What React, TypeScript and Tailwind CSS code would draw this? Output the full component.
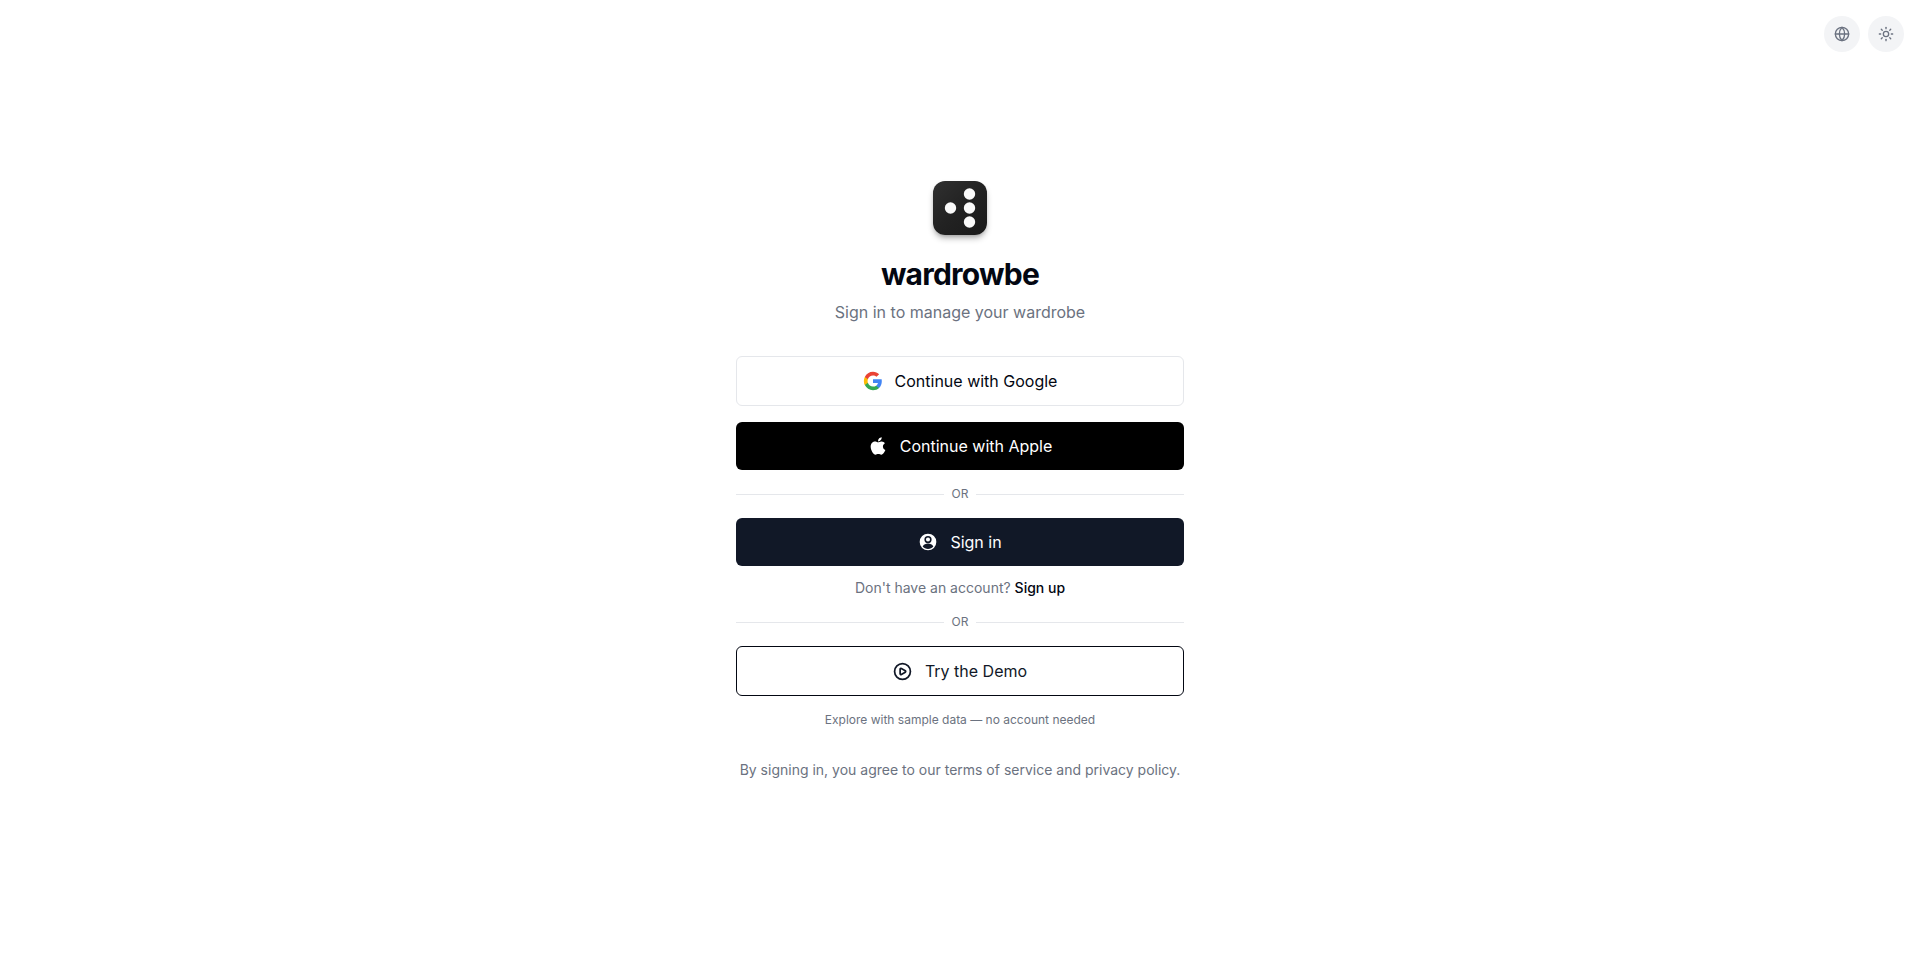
import React from "react";
import { Globe, Sun, CirclePlay } from "lucide-react";
import { FaApple } from "react-icons/fa6";

function GoogleIcon() {
  return (
    <svg viewBox="0 0 24 24" className="w-5 h-5">
      <path fill="#4285F4" d="M22.56 12.25c0-.78-.07-1.53-.2-2.25H12v4.26h5.92c-.26 1.37-1.04 2.53-2.21 3.31v2.77h3.57c2.08-1.92 3.28-4.74 3.28-8.09z" />
      <path fill="#34A853" d="M12 23c2.97 0 5.46-.98 7.28-2.66l-3.57-2.77c-.98.66-2.23 1.06-3.71 1.06-2.86 0-5.29-1.93-6.16-4.53H2.18v2.84C3.99 20.53 7.7 23 12 23z" />
      <path fill="#FBBC05" d="M5.84 14.09c-.22-.66-.35-1.36-.35-2.09s.13-1.43.35-2.09V7.07H2.18C1.43 8.55 1 10.22 1 12s.43 3.45 1.18 4.93l2.85-2.22.81-.62z" />
      <path fill="#EA4335" d="M12 5.38c1.62 0 3.06.56 4.21 1.64l3.15-3.15C17.45 2.09 14.97 1 12 1 7.7 1 3.99 3.47 2.18 7.07l3.66 2.84c.87-2.6 3.3-4.53 6.16-4.53z" />
    </svg>
  );
}

function UserIcon() {
  return (
    <svg viewBox="0 0 24 24" className="w-5 h-5">
      <circle cx="12" cy="12" r="10" fill="#ffffff" />
      <circle cx="12" cy="9" r="3.4" fill="#ffffff" stroke="#111827" strokeWidth="1.9" />
      <path fill="#111827" d="M5.600 17.400c1.400-2.700 3.800-3.600 6.400-3.600s5 .9 6.400 3.600c-1.500 1.900-3.800 3-6.400 3s-4.900-1.100-6.400-3z" />
    </svg>
  );
}

function Divider() {
  return (
    <div className="flex items-center gap-2 h-4">
      <div className="flex-1 h-px bg-[#e5e7eb]" />
      <span className="text-xs leading-4 text-[#6b7280]">OR</span>
      <div className="flex-1 h-px bg-[#e5e7eb]" />
    </div>
  );
}

export default function App() {
  return (
    <div className="relative min-h-screen bg-white flex items-start justify-center pt-[181px] font-['Inter',sans-serif] text-[#111827]">
      <div className="absolute top-4 right-4 flex gap-2">
        <button className="w-9 h-9 rounded-full bg-[#f3f4f6] flex items-center justify-center text-[#6b7280]">
          <Globe className="w-4 h-4" />
        </button>
        <button className="w-9 h-9 rounded-full bg-[#f3f4f6] flex items-center justify-center text-[#6b7280]">
          <Sun className="w-4 h-4" />
        </button>
      </div>

      <div className="w-[448px] flex flex-col">
        <div className="flex flex-col items-center">
          <div className="w-[54px] h-[54px] rounded-xl bg-gradient-to-br from-[#303030] via-[#222222] to-[#1a1a1a] shadow-[0_4px_6px_-1px_rgba(0,0,0,0.3),0_2px_4px_-2px_rgba(0,0,0,0.2)]">
            <svg viewBox="0 0 54 54" className="w-full h-full">
              <circle cx="17.5" cy="27" r="5.7" fill="#fafafa" />
              <circle cx="36.5" cy="13" r="5.7" fill="#fafafa" />
              <circle cx="36.5" cy="27" r="5.7" fill="#fafafa" />
              <circle cx="36.5" cy="41" r="5.7" fill="#fafafa" />
            </svg>
          </div>
          <h1 className="mt-[21px] text-3xl leading-9 font-bold tracking-tight text-[#030712]">wardrowbe</h1>
          <p className="mt-2 text-base leading-6 text-[#6b7280]">Sign in to manage your wardrobe</p>
        </div>

        <div className="mt-8 flex flex-col">
          <button className="h-[50px] rounded-md border border-[#e5e7eb] bg-white flex items-center justify-center gap-3 text-base font-normal text-[#030712]">
            <GoogleIcon />
            <span>Continue with Google</span>
          </button>
          <button className="mt-4 h-12 rounded-md bg-black flex items-center justify-center gap-3 text-base font-normal text-white">
            <FaApple className="w-5 h-5" />
            <span>Continue with Apple</span>
          </button>
          <div className="mt-4">
            <Divider />
          </div>
          <button className="mt-4 h-12 rounded-md bg-[#111827] flex items-center justify-center gap-3 text-base font-normal text-white">
            <UserIcon />
            <span>Sign in</span>
          </button>
          <p className="mt-3 text-sm leading-5 text-center text-[#6b7280]">
            Don't have an account? <a className="font-medium text-[#030712]">Sign up</a>
          </p>
          <div className="mt-4">
            <Divider />
          </div>
          <button className="mt-4 h-[50px] rounded-md border border-[#030712] bg-white flex items-center justify-center gap-3 text-base font-normal text-[#111827]">
            <span className="w-5 h-5 flex items-center justify-center">
              <CirclePlay className="w-[19px] h-[19px]" strokeWidth={2.2} />
            </span>
            <span>Try the Demo</span>
          </button>
          <p className="mt-4 text-xs leading-4 text-center text-[#6b7280]">Explore with sample data — no account needed</p>
        </div>

        <p className="mt-8 text-sm leading-5 text-center text-[#6b7280]">By signing in, you agree to our terms of service and privacy policy.</p>
      </div>
    </div>
  );
}
